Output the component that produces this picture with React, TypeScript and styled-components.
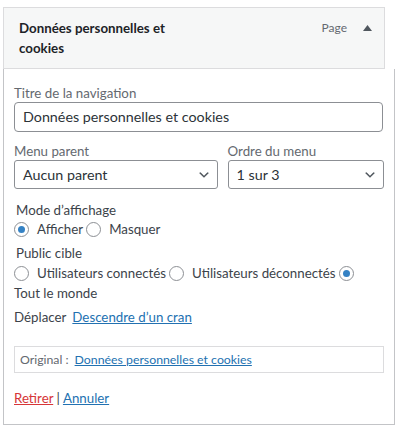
import React from "react";
import styled, { createGlobalStyle } from "styled-components";

const Global = createGlobalStyle`
  html, body { margin: 0; padding: 0; background: #ffffff; }
  body { font-family: Lato, "Open Sans", sans-serif; color: #3c434a; }
  * { box-sizing: border-box; }
`;

const Page = styled.div`
  padding: 7px 0 0 3px;
  width: 407px;
`;

const Handle = styled.div`
  width: 382px;
  background: #f6f7f7;
  border: 1px solid #dcdcde;
  padding: 10px 12px 10px 15px;
  display: flex;
  align-items: flex-start;
`;

const ItemTitle = styled.div`
  flex: 1;
  font-size: 13.3px;
  font-weight: 700;
  line-height: 20px;
  color: #1d2327;
  max-width: 185px;
  margin-right: auto;
`;

const Controls = styled.div`
  display: flex;
  align-items: center;
  gap: 16px;
  height: 20px;
`;

const ItemType = styled.span`
  font-size: 12px;
  color: #646970;
  line-height: 20px;
`;

const Settings = styled.div`
  width: 392px;
  border: 1px solid #c3c4c7;
  border-top: none;
  padding: 15px 10px 17px 10px;
  display: flex;
  flex-direction: column;
`;

const FieldRow = styled.div<{ $mt?: number }>`
  display: flex;
  gap: 10px;
  margin-top: ${(p) => p.$mt ?? 0}px;
`;

const Field = styled.label<{ $grow?: number }>`
  display: flex;
  flex-direction: column;
  flex: ${(p) => p.$grow ?? 1};
  min-width: 0;
`;

const FieldLabel = styled.span`
  font-size: 13.3px;
  line-height: 18px;
  color: #646970;
`;

const TextInput = styled.div`
  height: 30px;
  border: 1px solid #8c8f94;
  border-radius: 4px;
  padding: 0 8px;
  font-size: 14.3px;
  line-height: 28px;
  color: #2c3338;
  width: 369px;
`;

const Select = styled.div`
  height: 29px;
  border: 1px solid #8c8f94;
  border-radius: 3px;
  padding: 0 6px 0 8px;
  font-size: 14.3px;
  color: #2c3338;
  display: flex;
  align-items: center;
  justify-content: space-between;
`;

const Fieldset = styled.div<{ $mt: number }>`
  margin-top: ${(p) => p.$mt}px;
  padding-left: 2px;
`;

const Legend = styled.div`
  font-size: 13.3px;
  line-height: 19px;
  color: #3c434a;
`;

const Options = styled.div<{ $lh: number }>`
  font-size: 13.3px;
  line-height: ${(p) => p.$lh}px;
  color: #3c434a;
  margin-left: -2px;
`;

const Option = styled.span<{ $gap: number }>`
  margin-right: ${(p) => p.$gap}px;
`;

const Radio = styled.span<{ $checked?: boolean }>`
  display: inline-block;
  width: 15px;
  height: 15px;
  border: 1px solid #8c8f94;
  border-radius: 50%;
  vertical-align: -3px;
  margin-right: 8px;
  background: #fff;
  position: relative;
  &::after {
    content: "";
    display: ${(p) => (p.$checked ? "block" : "none")};
    position: absolute;
    left: 3px;
    top: 3px;
    width: 7px;
    height: 7px;
    border-radius: 50%;
    background: #3582c4;
  }
`;

const OptionText = styled.span`
  white-space: nowrap;
`;

const MoveRow = styled.div`
  margin-top: 5px;
  font-size: 13.3px;
  line-height: 18px;
  color: #3c434a;
  display: flex;
  gap: 6px;
`;

const Link = styled.a<{ $danger?: boolean }>`
  color: ${(p) => (p.$danger ? "#d63638" : "#2271b1")};
  text-decoration: underline;
  cursor: pointer;
`;

const Original = styled.div`
  margin-top: 20px;
  border: 1px solid #dcdcde;
  padding: 3px 5px;
  font-size: 12.3px;
  line-height: 19px;
  color: #646970;
  display: flex;
  gap: 6px;
  width: 370px;
`;

const Actions = styled.div`
  margin-top: 16px;
  font-size: 13.3px;
  line-height: 18px;
  color: #3c434a;
`;

const Chevron = () => (
  <svg width="14" height="14" viewBox="0 0 20 20" aria-hidden>
    <path d="M5 6l5 5 5-5 2 1-7 7-7-7 2-1z" fill="#50575e" />
  </svg>
);

const UpArrow = () => (
  <svg width="9" height="6" viewBox="0 0 9 6" aria-hidden>
    <path d="M0 6 L4.5 0 L9 6 Z" fill="#50575e" />
  </svg>
);

export default function App() {
  return (
    <>
      <Global />
      <Page>
        <Handle>
          <ItemTitle>Données personnelles et cookies</ItemTitle>
          <Controls>
            <ItemType>Page</ItemType>
            <UpArrow />
          </Controls>
        </Handle>
        <Settings>
          <Field>
            <FieldLabel>Titre de la navigation</FieldLabel>
            <TextInput>Données personnelles et cookies</TextInput>
          </Field>
          <FieldRow $mt={10}>
            <Field $grow={203}>
              <FieldLabel>Menu parent</FieldLabel>
              <Select>
                Aucun parent
                <Chevron />
              </Select>
            </Field>
            <Field $grow={156}>
              <FieldLabel>Ordre du menu</FieldLabel>
              <Select>
                1 sur 3
                <Chevron />
              </Select>
            </Field>
          </FieldRow>
          <Fieldset $mt={12}>
            <Legend>Mode d’affichage</Legend>
            <Options $lh={19}>
              <Option $gap={3}>
                <Radio $checked />
                <OptionText>Afficher</OptionText>
              </Option>
              <Option $gap={3}>
                <Radio />
                <OptionText>Masquer</OptionText>
              </Option>
            </Options>
          </Fieldset>
          <Fieldset $mt={5}>
            <Legend>Public cible</Legend>
            <Options $lh={20}>
              <Option $gap={3}>
                <Radio />
                <OptionText>Utilisateurs connectés</OptionText>
              </Option>
              <Option $gap={3}>
                <Radio />
                <OptionText>Utilisateurs déconnectés</OptionText>
              </Option>
              <Option $gap={0}>
                <Radio $checked /> <OptionText>Tout le monde</OptionText>
              </Option>
            </Options>
          </Fieldset>
          <MoveRow>
            Déplacer <Link>Descendre d’un cran</Link>
          </MoveRow>
          <Original>
            Original :<Link>Données personnelles et cookies</Link>
          </Original>
          <Actions>
            <Link $danger>Retirer</Link> | <Link>Annuler</Link>
          </Actions>
        </Settings>
      </Page>
    </>
  );
}
